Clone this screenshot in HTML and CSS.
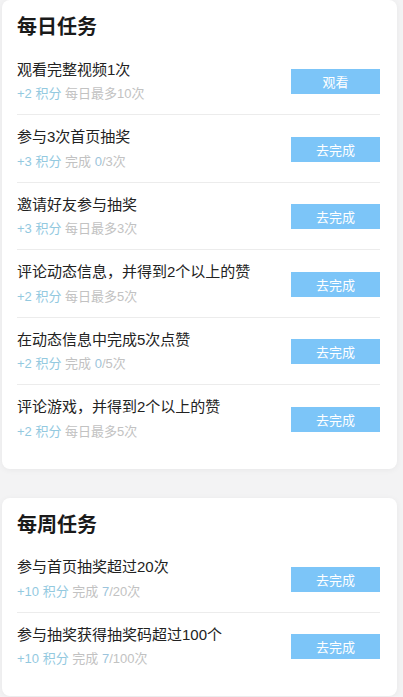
FILE: index.html
```html
<!DOCTYPE html>
<html lang="zh-CN">
<head>
    <meta charset="UTF-8">
    <meta name="viewport" content="width=device-width, initial-scale=1.0">
    <title>任务中心</title>
    <link rel="stylesheet" href="styles.css">
</head>
<body>
    <div class="card">
        <h2 class="card-title">每日任务</h2>
        <div class="task">
            <div class="task-info">
                <div class="task-name">观看完整视频1次</div>
                <div class="task-meta"><span class="points">+2 积分</span> 每日最多10次</div>
            </div>
            <button type="button" class="btn">观看</button>
        </div>
        <div class="task">
            <div class="task-info">
                <div class="task-name">参与3次首页抽奖</div>
                <div class="task-meta"><span class="points">+3 积分</span> 完成 <span class="count">0</span>/3次</div>
            </div>
            <button type="button" class="btn">去完成</button>
        </div>
        <div class="task">
            <div class="task-info">
                <div class="task-name">邀请好友参与抽奖</div>
                <div class="task-meta"><span class="points">+3 积分</span> 每日最多3次</div>
            </div>
            <button type="button" class="btn">去完成</button>
        </div>
        <div class="task">
            <div class="task-info">
                <div class="task-name">评论动态信息，并得到2个以上的赞</div>
                <div class="task-meta"><span class="points">+2 积分</span> 每日最多5次</div>
            </div>
            <button type="button" class="btn">去完成</button>
        </div>
        <div class="task">
            <div class="task-info">
                <div class="task-name">在动态信息中完成5次点赞</div>
                <div class="task-meta"><span class="points">+2 积分</span> 完成 <span class="count">0</span>/5次</div>
            </div>
            <button type="button" class="btn">去完成</button>
        </div>
        <div class="task">
            <div class="task-info">
                <div class="task-name">评论游戏，并得到2个以上的赞</div>
                <div class="task-meta"><span class="points">+2 积分</span> 每日最多5次</div>
            </div>
            <button type="button" class="btn">去完成</button>
        </div>
    </div>

    <div class="card">
        <h2 class="card-title">每周任务</h2>
        <div class="task">
            <div class="task-info">
                <div class="task-name">参与首页抽奖超过20次</div>
                <div class="task-meta"><span class="points">+10 积分</span> 完成 <span class="count">7</span>/20次</div>
            </div>
            <button type="button" class="btn">去完成</button>
        </div>
        <div class="task">
            <div class="task-info">
                <div class="task-name">参与抽奖获得抽奖码超过100个</div>
                <div class="task-meta"><span class="points">+10 积分</span> 完成 <span class="count">7</span>/100次</div>
            </div>
            <button type="button" class="btn">去完成</button>
        </div>
    </div>
</body>
</html>
```

FILE: styles.css
```css
body {
    font-family: "Liberation Sans", "Noto Sans CJK SC", sans-serif;
    margin: 0;
    padding: 0;
    background-color: #f3f3f4;
}

.card {
    width: 395px;
    box-sizing: border-box;
    margin: 0 0 29px 2px;
    padding: 0 17px 17px 15px;
    background-color: #fff;
    border-radius: 8px;
    box-shadow: 0 1px 6px rgba(0, 0, 0, 0.05);
}

.card-title {
    margin: 0;
    padding-top: 13px;
    height: 34.5px;
    font-size: 20px;
    line-height: 28px;
    font-weight: bold;
    color: #1a1a1a;
}

.task {
    display: flex;
    align-items: center;
    justify-content: space-between;
    padding: 10px 0;
    border-bottom: 1px solid #ececec;
}

.task:last-child {
    border-bottom: none;
}

.task-name {
    font-size: 15px;
    line-height: 23px;
    color: #222;
}

.task-meta {
    margin-top: 2.5px;
    font-size: 13px;
    line-height: 21px;
    color: #c2c2c2;
}

.points {
    color: #93c9df;
}

.count {
    color: #9cc4dc;
}

.btn {
    width: 89px;
    height: 25px;
    margin-top: 2px;
    padding: 0;
    border: none;
    border-radius: 0;
    font-family: inherit;
    font-size: 13px;
    color: #fff;
    background-color: #7cc5f8;
    cursor: pointer;
}
```
